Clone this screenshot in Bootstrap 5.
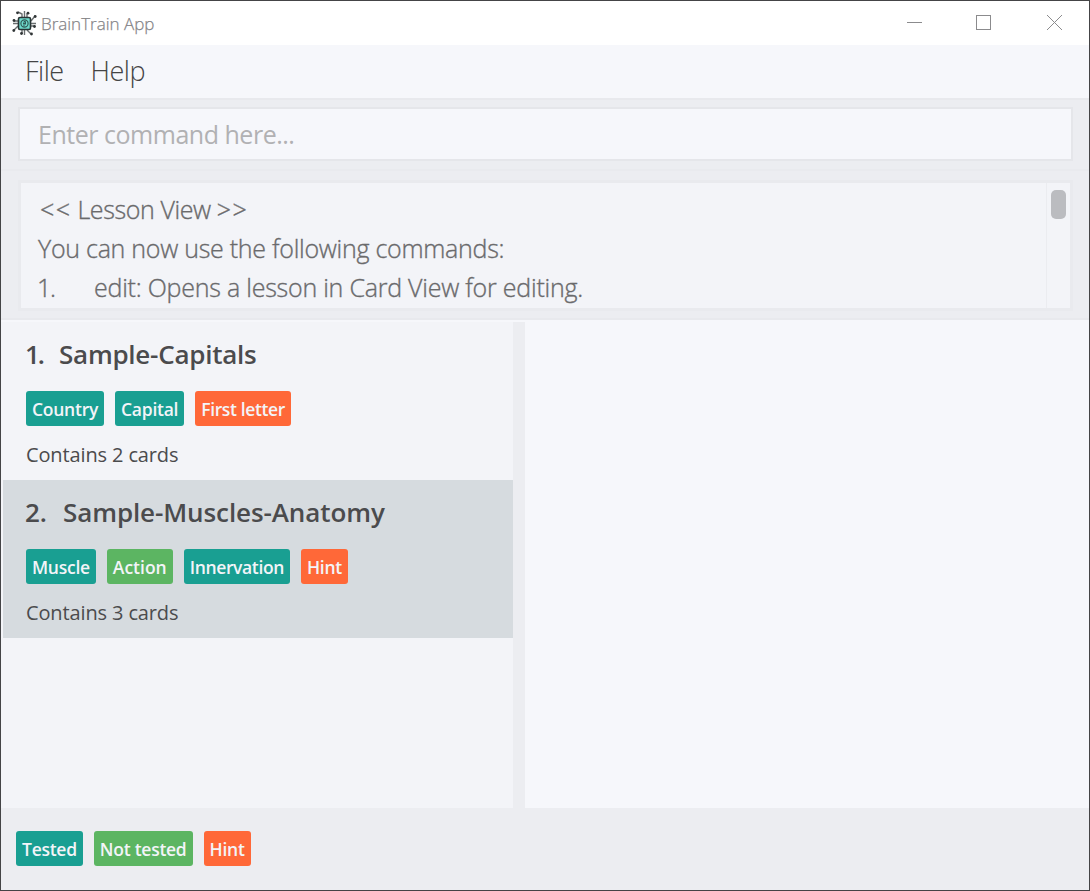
<!DOCTYPE html>
<html lang="en">
<head>
<meta charset="utf-8">
<meta name="viewport" content="width=device-width, initial-scale=1">
<title>BrainTrain App</title>
<link href="https://cdn.jsdelivr.net/npm/bootstrap@5.3.0/dist/css/bootstrap.min.css" rel="stylesheet">
<style>
  body { font-family: "Open Sans", "Noto Sans", sans-serif; color: #4b4b4d; background: #ecedf1; white-space: nowrap; }
  .app-window { height: 891px; border: 1px solid #444446; }
  .title-bar { height: 44px; background: #fff; padding-left: 11px; }
  .app-name { font-size: 17px; font-weight: 300; color: #858588; line-height: 24px; margin: 2px 0 0 4px; -webkit-text-stroke: .25px #858588; }
  .menu-bar { height: 53px; background: #f6f7fb; padding: 0 24px; gap: 27px; }
  .menu-bar .menu-link { font-size: 27px; font-weight: 300; line-height: 51px; color: #444; text-decoration: none; letter-spacing: -.5px; }
  .command-area { height: 73px; border-top: 2px solid #e8e9ed; border-bottom: 2px solid #e9eaee; padding: 7px 16px 0 17px; }
  .command-area .command-box { height: 54px; border: 2px solid #e5e6ea; border-radius: 0; background: #f6f7fb; padding: 0 18px; font-size: 25px; line-height: 50px; color: #4b4b4d; box-shadow: none; letter-spacing: -.48px; }
  .command-box::placeholder { color: #b1b1b3; opacity: 1; }
  .result-area { height: 149px; padding: 9px 16px 9px 17px; border-bottom: 2px solid #e8e9ed; }
  .result-box { height: 131px; border: 3px solid #e9eaee; background: #f3f4f8; }
  .result-text { font-size: 25px; font-weight: 300; line-height: 39px; padding: 7px 0 0 17px; color: #6a6a6c; letter-spacing: -.27px; -webkit-text-stroke: .35px #6a6a6c; }
  .result-heading { padding-left: 2px; letter-spacing: -.4px; }
  .result-heading .angles { letter-spacing: 1.4px; }
  .result-no { width: 57px; letter-spacing: -1.2px; margin-left: -1px; }
  .result-item { letter-spacing: -.23px; }
  .scroll-track { width: 24px; border-left: 1px solid #ebecf0; padding: 7px 4px; }
  .scroll-thumb { width: 15px; height: 29px; border-radius: 5px; background: #bbbcc0; }
  .lesson-pane { width: 512px; background: #f3f4f8; padding-left: 2px; }
  .lesson-pane, .split-bar { border-top: 2px solid #f6f7fb; }
  .split-bar { width: 12px; background: #ecedf1; }
  .card-pane { background: #f6f7fb; }
  .lesson-item { height: 158px; padding: 14px 23px 0; }
  .lesson-item.chosen { background: #d6dbdf; }
  .lesson-title { font-size: 26px; font-weight: 600; line-height: 36px; margin: 0 0 19px; letter-spacing: -.25px; }
  .chosen .lesson-title { letter-spacing: -.1px; }
  .lesson-no { display: inline-block; width: 34px; margin-left: -1px; letter-spacing: -2px; }
  .chosen .lesson-no { width: 38px; letter-spacing: 0; }
  .tag-row { gap: 11px; }
  .tag { height: 35px; border-radius: 3px; padding: 2px 6px 0; font-size: 17.5px; font-weight: 600; line-height: 33px; color: #f3f4f8; background: #199f92; letter-spacing: -.26px; }
  .tag-green { background: #5cb562; }
  .tag-orange { background: #ff6838; }
  .tag-even { letter-spacing: 0; }
  .tag-tight { letter-spacing: -.37px; }
  .lesson-count { font-size: 20px; line-height: 28px; margin-top: 15px; letter-spacing: -.13px; }
  .status-bar { height: 82px; padding: 23px 15px 0; }
</style>
</head>
<body>
<div class="app-window d-flex flex-column overflow-hidden">
  <header class="title-bar d-flex align-items-center flex-shrink-0">
    <svg width="25" height="25" viewBox="0 0 25 25" fill="none" stroke="#6a6f70" stroke-width="1.4">
      <path d="M10 6V3L6 1M12.500 6V0M15 6V2.500M10 19v4M12.500 19v5M15 19l4 4M6 10H2M6 12.500H1M6 15l-4 4M19 10l4-5M19 12.500h5M19 15h4"/>
      <g fill="#303536" stroke="none"><circle cx="5.500" cy="1.800" r="1.400"/><circle cx="16" cy="2.200" r="1.400"/><circle cx="23.200" cy="5.500" r="1.400"/><circle cx="2" cy="9.500" r="1.400"/><circle cx="1.800" cy="19.500" r="1.400"/><circle cx="9.500" cy="22.500" r="1.400"/><circle cx="19.500" cy="23" r="1.400"/><circle cx="22.500" cy="15.500" r="1.400"/></g>
      <rect x="6.500" y="6.500" width="12" height="12" rx="1.500" fill="#6edbcc" stroke="#293536" stroke-width="1.600"/>
      <circle cx="12.500" cy="12.500" r="3.600" stroke="#315b58" stroke-width="1.200"/><path d="M12 15.500v-5h1.500v3M11 12.500h2" stroke="#315b58" stroke-width="1"/>
    </svg>
    <span class="app-name">BrainTrain App</span>
    <svg class="ms-auto me-3" width="166" height="20" viewBox="0 0 166 20" fill="none" stroke="#8b8b8d" shape-rendering="crispEdges"><path d="M0 9.500h15M69.500 2.500h14v14h-14z"/><path d="M140 2l15 15M155 2l-15 15" shape-rendering="auto"/></svg>
  </header>
  <nav class="menu-bar d-flex flex-shrink-0"><a class="menu-link" href="#">File</a><a class="menu-link" href="#">Help</a></nav>
  <section class="command-area flex-shrink-0"><input class="form-control command-box" placeholder="Enter command here..." aria-label="Command"></section>
  <section class="result-area flex-shrink-0">
    <div class="result-box d-flex overflow-hidden">
      <div class="result-text flex-grow-1"><div class="result-heading"><span class="angles">&lt;&lt;</span> Lesson View <span class="angles">&gt;&gt;</span></div><div>You can now use the following commands:</div><div class="d-flex"><span class="result-no">1.</span><span class="result-item">edit: Opens a lesson in Card View for editing.</span></div></div>
      <div class="scroll-track"><div class="scroll-thumb"></div></div>
    </div>
  </section>
  <main class="d-flex flex-grow-1">
    <section class="lesson-pane flex-shrink-0">
      <article class="lesson-item"><h2 class="lesson-title"><span class="lesson-no">1.</span><span>Sample-Capitals</span></h2><div class="tag-row d-flex"><span class="tag">Country</span><span class="tag">Capital</span><span class="tag tag-orange tag-tight">First letter</span></div><div class="lesson-count">Contains 2 cards</div></article>
      <article class="lesson-item chosen"><h2 class="lesson-title"><span class="lesson-no">2.</span><span>Sample-Muscles-Anatomy</span></h2><div class="tag-row d-flex"><span class="tag">Muscle</span><span class="tag tag-green tag-even">Action</span><span class="tag tag-tight">Innervation</span><span class="tag tag-orange">Hint</span></div><div class="lesson-count">Contains 3 cards</div></article>
    </section>
    <div class="split-bar flex-shrink-0"></div>
    <section class="card-pane flex-grow-1"></section>
  </main>
  <footer class="status-bar tag-row d-flex flex-shrink-0"><span class="tag">Tested</span><span class="tag tag-green">Not tested</span><span class="tag tag-orange">Hint</span></footer>
</div>
<script src="https://cdn.jsdelivr.net/npm/bootstrap@5.3.0/dist/js/bootstrap.bundle.min.js"></script>
</body>
</html>
